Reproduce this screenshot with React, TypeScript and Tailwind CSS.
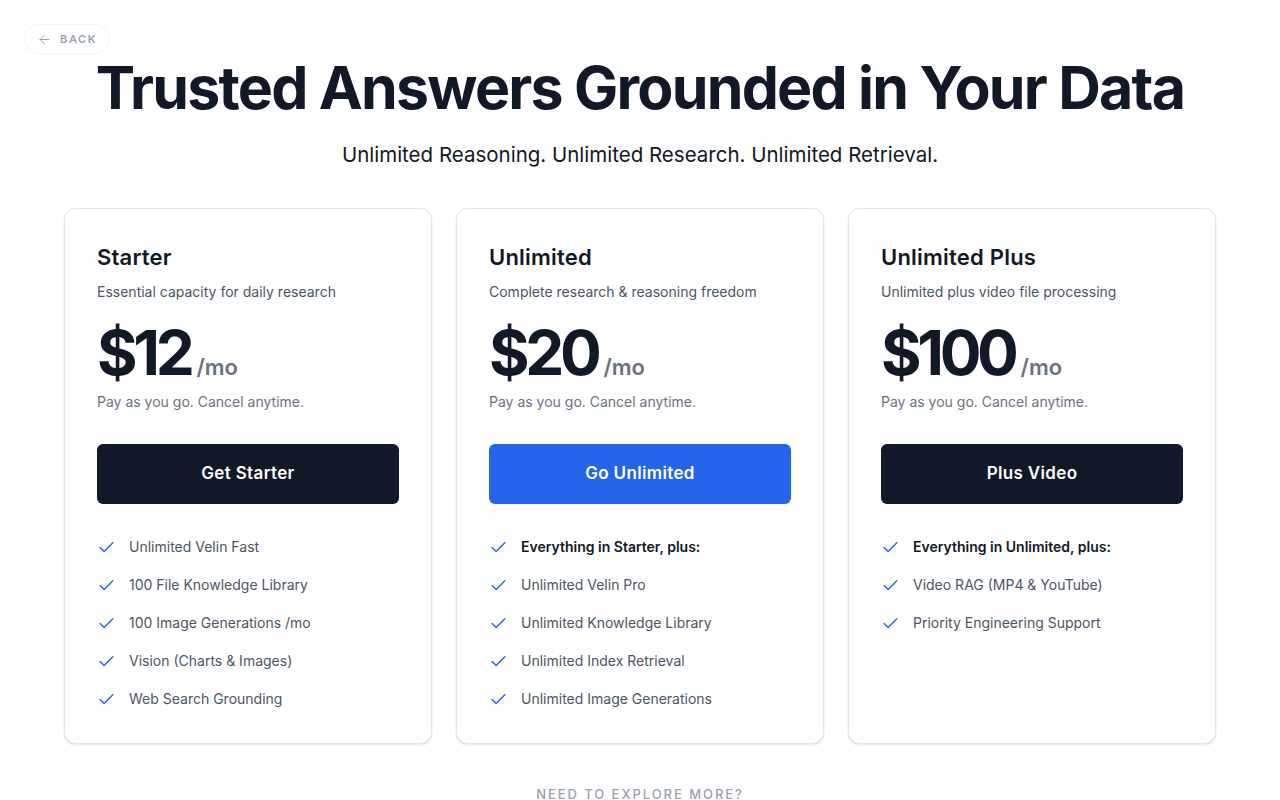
import { ArrowLeft, Check } from 'lucide-react';

const plans = [
  {
    name: 'Starter',
    desc: 'Essential capacity for daily research',
    price: '$12',
    cta: 'Get Starter',
    primary: false,
    lead: null as string | null,
    features: [
      'Unlimited Velin Fast',
      '100 File Knowledge Library',
      '100 Image Generations /mo',
      'Vision (Charts & Images)',
      'Web Search Grounding',
    ],
  },
  {
    name: 'Unlimited',
    desc: 'Complete research & reasoning freedom',
    price: '$20',
    cta: 'Go Unlimited',
    primary: true,
    lead: 'Everything in Starter, plus:',
    features: [
      'Unlimited Velin Pro',
      'Unlimited Knowledge Library',
      'Unlimited Index Retrieval',
      'Unlimited Image Generations',
    ],
  },
  {
    name: 'Unlimited Plus',
    desc: 'Unlimited plus video file processing',
    price: '$100',
    cta: 'Plus Video',
    primary: false,
    lead: 'Everything in Unlimited, plus:',
    features: ['Video RAG (MP4 & YouTube)', 'Priority Engineering Support'],
  },
];

export default function App() {
  return (
    <div className="relative min-h-screen bg-white text-[#111827] font-['Inter',sans-serif]">
      {/* Back */}
      <button className="absolute left-6 top-6 flex items-center gap-2 h-[30px] pl-3 pr-3 rounded-full border border-gray-100 text-[11px] font-semibold tracking-[0.15em] text-gray-400">
        <ArrowLeft size={15} strokeWidth={1.6} />
        BACK
      </button>

      <div className="max-w-6xl mx-auto pt-[52px]">
        <h1 className="text-center text-[59px] leading-[72px] font-bold tracking-[-0.03em]">
          Trusted Answers Grounded in Your Data
        </h1>
        <p className="mt-[17px] text-center text-[20.5px] leading-7 text-[#111827]">
          Unlimited Reasoning. Unlimited Research. Unlimited Retrieval.
        </p>

        {/* Cards */}
        <div className="mt-[39px] grid grid-cols-3 gap-6">
          {plans.map((p) => (
            <div
              key={p.name}
              className="h-[536px] rounded-xl border border-gray-200 bg-white shadow-sm px-8 pt-[34px]"
            >
              <h3 className="text-[22px] leading-7 font-semibold tracking-[0.01em]">{p.name}</h3>
              <p className="mt-[11px] text-sm text-gray-600">{p.desc}</p>
              <div className="mt-[15px] flex items-baseline gap-[6px]">
                <span className="text-[62px] leading-[72px] font-bold tracking-[-0.07em]">{p.price}</span>
                <span className="text-[22px] font-semibold text-gray-500">/mo</span>
              </div>
              <p className="mt-[3px] text-sm text-gray-500">Pay as you go. Cancel anytime.</p>
              <button
                className={`mt-[32px] w-full h-[60px] rounded-md text-[17px] font-semibold tracking-[0.02em] text-white ${
                  p.primary ? 'bg-[#2563eb]' : 'bg-[#111827]'
                }`}
              >
                {p.cta}
              </button>
              <ul className="mt-[31px] flex flex-col gap-[14px]">
                {p.lead && (
                  <li className="flex items-center gap-[13px] h-6 text-sm font-semibold text-[#111827]">
                    <Check size={19} strokeWidth={1.8} className="text-[#2563eb]" />
                    {p.lead}
                  </li>
                )}
                {p.features.map((f) => (
                  <li key={f} className="flex items-center gap-[13px] h-6 text-sm text-gray-600">
                    <Check size={19} strokeWidth={1.8} className="text-[#2563eb]" />
                    {f}
                  </li>
                ))}
              </ul>
            </div>
          ))}
        </div>

        <p className="mt-[40px] text-center text-[13px] leading-5 tracking-[0.15em] text-gray-400 font-medium">
          NEED TO EXPLORE MORE?
        </p>
      </div>
    </div>
  );
}
